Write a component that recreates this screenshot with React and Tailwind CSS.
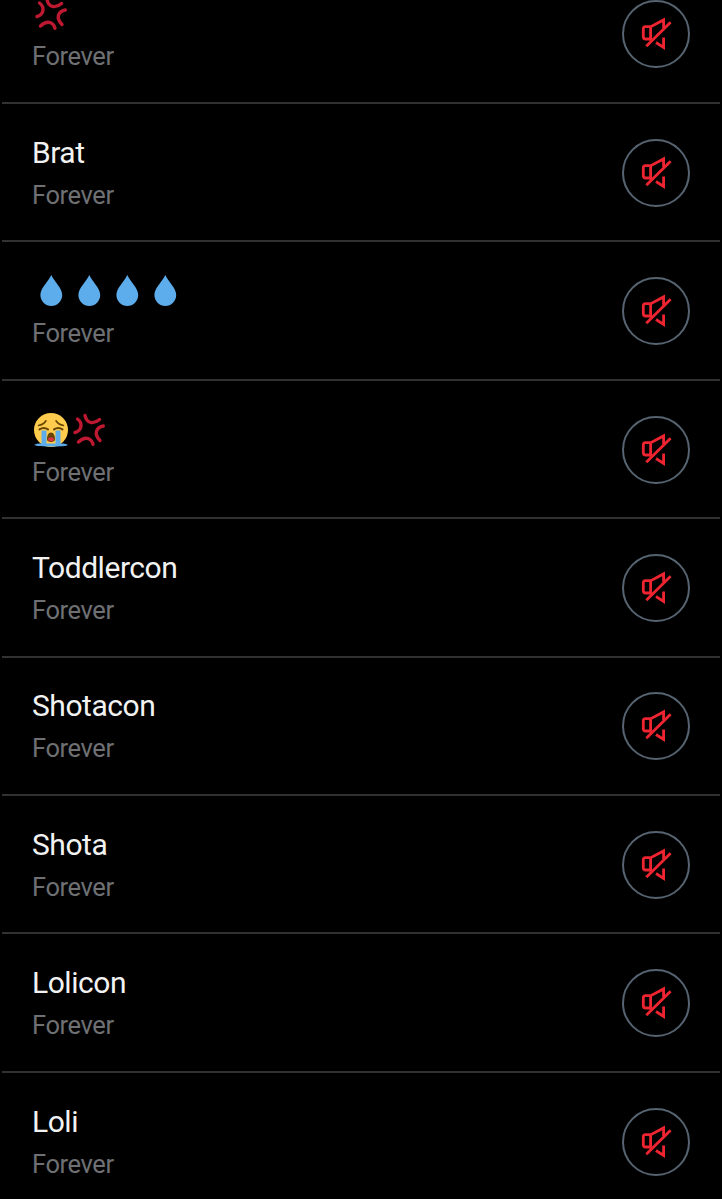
const DropEmoji = () => (
  <svg viewBox="0 0 36 36" className="h-9 w-9">
    <path d="M18.3 2C14.8 9.2 7.4 15.2 7.4 22.1a10.9 10.9 0 0 0 21.8 0C29.2 15.2 21.8 9.2 18.3 2Z" fill="#5dadec" />
  </svg>
);

const AngerEmoji = () => (
  <svg viewBox="0 0 36 36" className="h-9 w-9" fill="none" stroke="#be1931" strokeWidth="3.4" strokeLinecap="round">
    <path d="M6.5 7C12 11 11 18.5 4 20.5" />
    <path d="M14 3.5C15.5 11 22 13 28.5 7.5" />
    <path d="M32.3 14C25 15.5 22.5 22 29 28.5" />
    <path d="M7.5 30C13.5 24.5 20 25 22 32.3" />
  </svg>
);

const SobEmoji = () => (
  <svg viewBox="0 0 36 36" className="h-9 w-9">
    <circle cx="18" cy="18" r="17" fill="#ffcc4d" />
    <path d="M1 33C4 31 8 31.5 10 31.5H26C28 31.5 32 31 35 33C33 35 5 35 1 33Z" fill="#5dadec" />
    <path d="M8.5 18.5H13.5V33H8.5ZM22.5 18.5H27.5V33H22.5Z" fill="#5dadec" />
    <path d="M5.5 13.5C9 13 11.5 11 13 8.8M30.5 13.5C27 13 24.5 11 23 8.8" fill="none" stroke="#664500" strokeWidth="1.6" strokeLinecap="round" />
    <path d="M6.5 17.4C9 15.8 12.5 15.8 15 17.4M21 17.4C23.5 15.8 27 15.8 29.5 17.4" fill="none" stroke="#664500" strokeWidth="2" strokeLinecap="round" />
    <path d="M18 20.5C15.2 20.5 14 24 14 27C14 29.3 15.5 30 18 30S22 29.3 22 27C22 24 20.8 20.5 18 20.5Z" fill="#664500" />
    <ellipse cx="18" cy="27.2" rx="2.9" ry="2" fill="#dd2e44" />
  </svg>
);

const MuteIcon = () => (
  <svg viewBox="-1 1.5 42 42" className="h-[42px] w-[42px] shrink-0" fill="none" stroke="#ee2531" strokeWidth="2.8">
    <path d="M14.5 27.5H9.5Q7.3 27.5 7.3 25.3V17.4Q7.3 15.2 9.5 15.2H14.8L27.6 8.4V16.5" />
    <path d="M14.6 15.2V29" />
    <path d="M10.3 34.7L34.6 10.7" />
    <path d="M20 31L27.6 36V26" />
  </svg>
);

const MUTED_WORDS = [
  { emojis: [AngerEmoji] },
  { word: 'Brat' },
  { emojis: [DropEmoji, DropEmoji, DropEmoji, DropEmoji] },
  { emojis: [SobEmoji, AngerEmoji] },
  { word: 'Toddlercon' },
  { word: 'Shotacon' },
  { word: 'Shota' },
  { word: 'Lolicon' },
  { word: 'Loli' },
];

const MutedWord = ({ word, emojis }) => (
  <li className="flex h-[138.4px] shrink-0 items-center justify-between border-b-2 border-[#2f3133] px-[30px] pt-px">
    <div>
      {word ? (
        <p className="text-[30px] leading-9 tracking-[-0.45px] text-[#f2f2f2]">{word}</p>
      ) : (
        <div className="flex h-9 gap-0.5 pl-px">
          {emojis.map((Emoji, i) => (
            <Emoji key={i} />
          ))}
        </div>
      )}
      <p className="mt-2 text-[25.5px] leading-8 tracking-[-0.4px] text-[#6e7073]">Forever</p>
    </div>
    <button className="flex h-[68px] w-[68px] items-center justify-center rounded-full border-2 border-[#566370]">
      <MuteIcon />
    </button>
  </li>
);

export default function App() {
  return (
    <main className="h-[1199px] overflow-hidden bg-black px-0.5 font-['Roboto',sans-serif]">
      <ul className="-mt-[34.3px] flex flex-col">
        {MUTED_WORDS.map((item, i) => (
          <MutedWord key={i} {...item} />
        ))}
      </ul>
    </main>
  );
}
